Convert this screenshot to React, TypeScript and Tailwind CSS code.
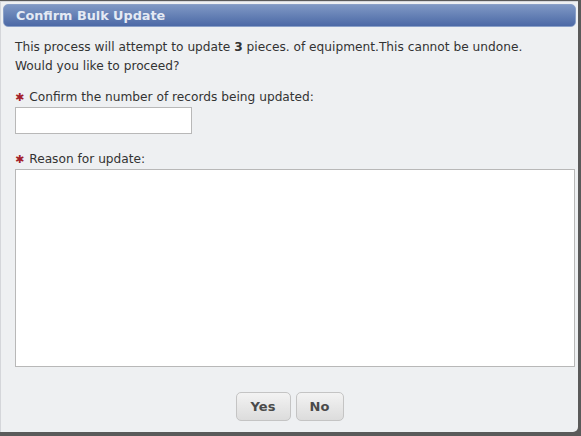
import { useState } from 'react'

export default function App() {
  const [count, setCount] = useState('')
  const [reason, setReason] = useState('')

  return (
    <main className="w-[581px] h-[436px] bg-[#5a5a5a] pt-px pr-[3px] pb-[4px] overflow-hidden" style={{ fontFamily: '"DejaVu Sans", Verdana, sans-serif' }}>
      <div className="h-full bg-[#eef0f2] border-l border-t border-[#d4d6da] rounded-br-[5px] pt-[2px] px-[2px] flex flex-col">
        {/* Title bar */}
        <div className="h-[23px] rounded-[5px] border border-[#8aa0c8] bg-gradient-to-b from-[#7f98c4] to-[#4c69a6] flex items-center pl-[12px]">
          <h1 className="text-[12.8px] font-bold text-[#e4eaf4]">Confirm Bulk Update</h1>
        </div>

        <div className="pl-[12px] pt-[11px] text-[12.2px] text-[#333] leading-[19px]">
          <p>
            This process will attempt to update <b>3</b> pieces. of equipment.This cannot be undone.
            <br />
            Would you like to proceed?
          </p>

          <label className="flex items-center gap-[5px] mt-[12px]">
            <span className="text-[#a3212b] text-[11px]">✱</span>
            Confirm the number of records being updated:
          </label>
          <input value={count} onChange={e => setCount(e.target.value)}
            className="block w-[177px] h-[27px] bg-white border border-[#b8b8b8] px-1 focus:outline-none" />

          <label className="flex items-center gap-[5px] mt-[16px]">
            <span className="text-[#a3212b] text-[11px]">✱</span>
            Reason for update:
          </label>
          <textarea value={reason} onChange={e => setReason(e.target.value)}
            className="block w-[560px] h-[198px] bg-white border border-[#b8b8b8] resize-none focus:outline-none" />

          <div className="flex justify-center gap-[5px] mt-[25px] pr-[12px]">
            <button className="w-[55px] h-[29px] rounded-[5px] border border-[#c4c4c4] bg-gradient-to-b from-[#f3f3f3] to-[#dcdcdc] font-bold text-[13px] text-[#4a4a4a]">Yes</button>
            <button className="w-[48px] h-[29px] rounded-[5px] border border-[#c4c4c4] bg-gradient-to-b from-[#f3f3f3] to-[#dcdcdc] font-bold text-[13px] text-[#4a4a4a]">No</button>
          </div>
        </div>
      </div>
    </main>
  )
}
